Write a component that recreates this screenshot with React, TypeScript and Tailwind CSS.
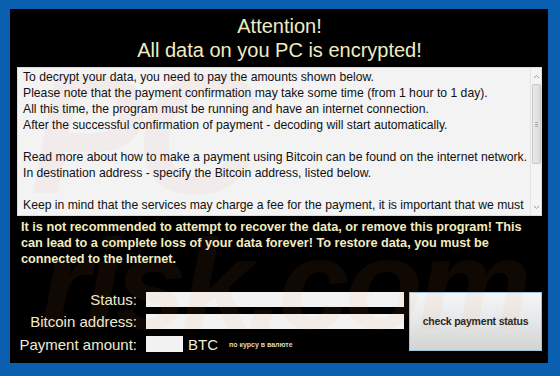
import React from 'react';

const bodyLines = [
  'To decrypt your data, you need to pay the amounts shown below.',
  'Please note that the payment confirmation may take some time (from 1 hour to 1 day).',
  'All this time, the program must be running and have an internet connection.',
  'After the successful confirmation of payment - decoding will start automatically.',
  '',
  'Read more about how to make a payment using Bitcoin can be found on the internet network.',
  'In destination address - specify the Bitcoin address, listed below.',
  '',
  'Keep in mind that the services may charge a fee for the payment, it is important that we must',
];

const warningLines = [
  'It is not recommended to attempt to recover the data, or remove this program! This',
  'can lead to a complete loss of your data forever! To restore data, you must be',
  'connected to the Internet.',
];

function Scrollbar() {
  return (
    <div className="w-[11px] shrink-0 flex flex-col items-center border-l border-[#e4e4e4] bg-[#f4f4f4] py-[2px]">
      <svg width="7" height="8" viewBox="0 0 7 8" className="mt-[3px]">
        <path d="M1 5 L3.5 2.5 L6 5" stroke="#9a9a9a" strokeWidth="1" fill="none" />
      </svg>
      <div className="mt-[3px] w-[9px] h-[80px] rounded-[2px] border border-[#c9c9c9] bg-gradient-to-r from-[#e9e9e9] to-[#dcdcdc] flex items-center justify-center">
        <div className="flex flex-col gap-[1px]">
          <div className="w-[3px] h-px bg-[#a8a8a8]" />
          <div className="w-[3px] h-px bg-[#a8a8a8]" />
          <div className="w-[3px] h-px bg-[#a8a8a8]" />
        </div>
      </div>
      <div className="flex-1" />
      <svg width="7" height="8" viewBox="0 0 7 8" className="mb-[2px]">
        <path d="M1 3 L3.5 5.5 L6 3" stroke="#9a9a9a" strokeWidth="1" fill="none" />
      </svg>
    </div>
  );
}

export default function App() {
  return (
    <div className="w-[560px] h-[376px] bg-[#0b5fb1] pl-[10px] pr-[12px] pt-[9px] pb-[13px] font-['Liberation_Sans',Arial,sans-serif]">
      <div className="relative h-full bg-black flex flex-col pl-[7px] pr-[6px] overflow-hidden">
        {/* Title */}
        <div className="pt-[5px] text-center text-[20px] leading-[24px] text-[#efecc2]">
          <div>Attention!</div>
          <div>All data on you PC is encrypted!</div>
        </div>

        {/* Message box */}
        <div className="mt-[5px] h-[149px] bg-[#f3f3f3] border border-[#dcdcdc] flex">
          <div className="flex-1 pl-[5px] pt-[1px] text-[12.2px] leading-[16px] text-[#111] overflow-hidden whitespace-nowrap">
            {bodyLines.map((line, i) => (
              <div key={i} className="h-[16px]">{line}</div>
            ))}
          </div>
          <Scrollbar />
        </div>

        {/* Warning */}
        <div className="mt-[3px] pl-[4px] text-[12.7px] leading-[16px] font-bold text-[#f2ecc0] whitespace-nowrap">
          {warningLines.map((line, i) => (
            <div key={i}>{line}</div>
          ))}
        </div>

        {/* Form */}
        <div className="mt-[25px] flex gap-[5px]">
          <div className="flex flex-col gap-[7px]">
            <div className="flex items-center h-[15px] gap-[9px]">
              <div className="w-[120px] text-right text-[15px] leading-[15px] text-[#f1ebd3]">Status:</div>
              <div className="w-[258px] h-[15px] bg-[#f2f2f2]" />
            </div>
            <div className="flex items-center h-[15px] gap-[9px]">
              <div className="w-[120px] text-right text-[15px] leading-[15px] text-[#f1ebd3]">Bitcoin address:</div>
              <div className="w-[258px] h-[15px] bg-[#f2f2f2]" />
            </div>
            <div className="flex items-center h-[16px] gap-[9px]">
              <div className="w-[120px] text-right text-[15px] leading-[15px] text-[#f1ebd3]">Payment amount:</div>
              <div className="flex items-center">
                <div className="w-[37px] h-[16px] bg-[#f2f2f2]" />
                <span className="ml-[5px] text-[15px] leading-[15px] text-[#f1ebd3]">BTC</span>
                <span className="ml-[11px] text-[7px] leading-[8px] font-bold text-[#ddd8c4] mt-[2px]">по курсу в валюте</span>
              </div>
            </div>
          </div>
          <button className="w-[133px] h-[59px] border border-[#9fc4da] bg-gradient-to-b from-[#f3f5f7] via-[#e6e7e8] to-[#d3d3d3] text-[10.5px] font-bold text-[#262626] tracking-[-0.2px]">
            check payment status
          </button>
        </div>

        {/* Watermark */}
        <div className="pointer-events-none absolute inset-0 select-none">
          <div className="absolute left-[20px] top-[40px] text-[170px] leading-none font-bold italic text-[rgba(200,60,40,0.04)] tracking-[-8px]">
            PC
          </div>
          <div className="absolute left-[30px] top-[212px] text-[128px] leading-none font-bold italic text-[rgba(255,130,50,0.06)] tracking-[-5px]">
            risk.com
          </div>
        </div>
      </div>
    </div>
  );
}
